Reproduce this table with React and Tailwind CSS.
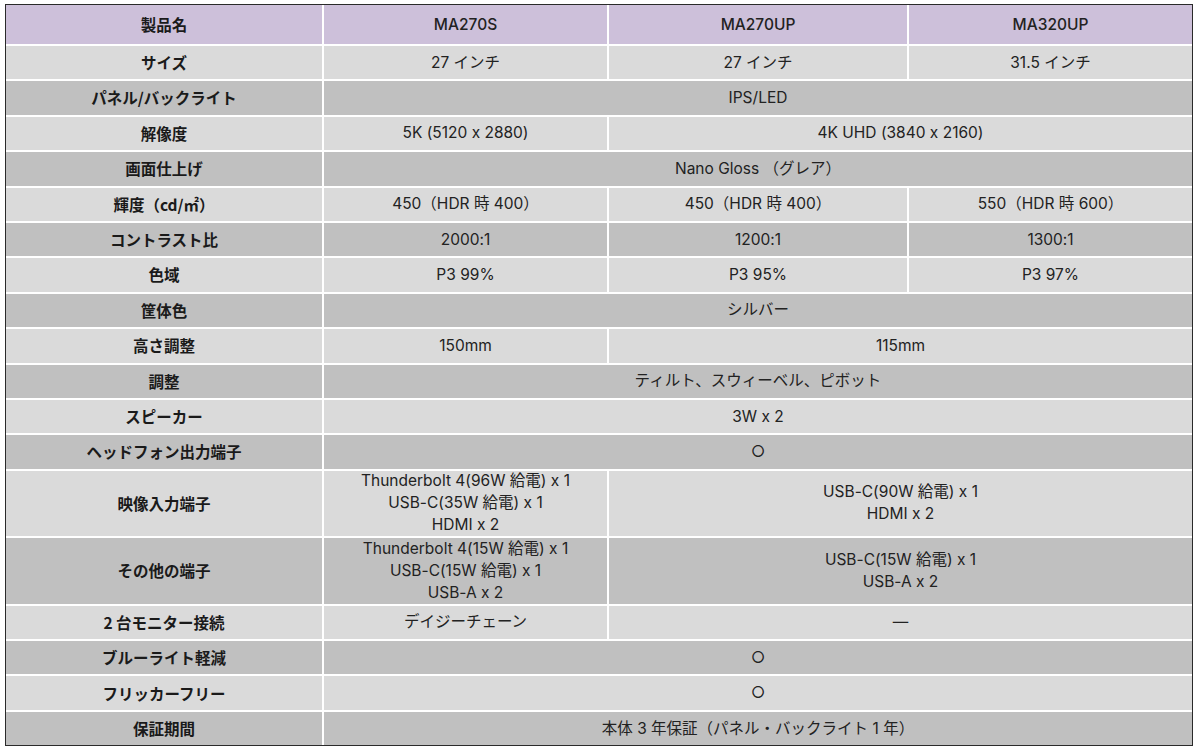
import React from "react";

const L = "bg-[#dadada]";
const D = "bg-[#c0c0c0]";

function Label({ bg, children }) {
  return (
    <div
      className={`${bg} flex items-center justify-center text-[15.5px] font-bold text-[#1a1a1a]`}
      style={{ fontFamily: '"Noto Sans CJK JP", sans-serif' }}
    >
      {children}
    </div>
  );
}

function Cell({ bg, span = "", children }) {
  return (
    <div
      className={`${bg} ${span} flex flex-col items-center justify-center text-center text-[15.5px] leading-[22px] text-[#222] [font-feature-settings:'calt'_0]`}
      style={{ fontFamily: 'Inter, "Noto Sans CJK JP", sans-serif' }}
    >
      {children}
    </div>
  );
}

export default function App() {
  const H = "bg-[#cdc0da]";
  return (
    <div className="w-[1200px] h-[752px] bg-white pl-[5px] pt-[4px]">
      <div className="w-[1188px] border border-[#2a2a2a] bg-white">
        <div className="grid grid-cols-[316px_283px_298px_283px] grid-rows-[39px_repeat(12,33.4px)_65.5px_65.5px_repeat(4,33.4px)] gap-[2px]">
          <Label bg={H}>製品名</Label>
          <Cell bg={H}><span className="font-medium">MA270S</span></Cell>
          <Cell bg={H}><span className="font-medium">MA270UP</span></Cell>
          <Cell bg={H}><span className="font-medium">MA320UP</span></Cell>

          <Label bg={L}>サイズ</Label>
          <Cell bg={L}>27 インチ</Cell>
          <Cell bg={L}>27 インチ</Cell>
          <Cell bg={L}>31.5 インチ</Cell>

          <Label bg={D}>パネル/バックライト</Label>
          <Cell bg={D} span="col-span-3">IPS/LED</Cell>

          <Label bg={L}>解像度</Label>
          <Cell bg={L}>5K (5120 x 2880)</Cell>
          <Cell bg={L} span="col-span-2">4K UHD (3840 x 2160)</Cell>

          <Label bg={D}>画面仕上げ</Label>
          <Cell bg={D} span="col-span-3">Nano Gloss （グレア）</Cell>

          <Label bg={L}>輝度（cd/㎡）</Label>
          <Cell bg={L}>450（HDR 時 400）</Cell>
          <Cell bg={L}>450（HDR 時 400）</Cell>
          <Cell bg={L}>550（HDR 時 600）</Cell>

          <Label bg={D}>コントラスト比</Label>
          <Cell bg={D}>2000:1</Cell>
          <Cell bg={D}>1200:1</Cell>
          <Cell bg={D}>1300:1</Cell>

          <Label bg={L}>色域</Label>
          <Cell bg={L}>P3 99%</Cell>
          <Cell bg={L}>P3 95%</Cell>
          <Cell bg={L}>P3 97%</Cell>

          <Label bg={D}>筐体色</Label>
          <Cell bg={D} span="col-span-3">シルバー</Cell>

          <Label bg={L}>高さ調整</Label>
          <Cell bg={L}>150mm</Cell>
          <Cell bg={L} span="col-span-2">115mm</Cell>

          <Label bg={D}>調整</Label>
          <Cell bg={D} span="col-span-3">ティルト、スウィーベル、ピボット</Cell>

          <Label bg={L}>スピーカー</Label>
          <Cell bg={L} span="col-span-3">3W x 2</Cell>

          <Label bg={D}>ヘッドフォン出力端子</Label>
          <Cell bg={D} span="col-span-3">○</Cell>

          <Label bg={L}>映像入力端子</Label>
          <Cell bg={L}>
            <span>Thunderbolt 4(96W 給電) x 1</span>
            <span>USB-C(35W 給電) x 1</span>
            <span>HDMI x 2</span>
          </Cell>
          <Cell bg={L} span="col-span-2">
            <span>USB-C(90W 給電) x 1</span>
            <span>HDMI x 2</span>
          </Cell>

          <Label bg={D}>その他の端子</Label>
          <Cell bg={D}>
            <span>Thunderbolt 4(15W 給電) x 1</span>
            <span>USB-C(15W 給電) x 1</span>
            <span>USB-A x 2</span>
          </Cell>
          <Cell bg={D} span="col-span-2">
            <span>USB-C(15W 給電) x 1</span>
            <span>USB-A x 2</span>
          </Cell>

          <Label bg={L}>2 台モニター接続</Label>
          <Cell bg={L}>デイジーチェーン</Cell>
          <Cell bg={L} span="col-span-2">—</Cell>

          <Label bg={D}>ブルーライト軽減</Label>
          <Cell bg={D} span="col-span-3">○</Cell>

          <Label bg={L}>フリッカーフリー</Label>
          <Cell bg={L} span="col-span-3">○</Cell>

          <Label bg={D}>保証期間</Label>
          <Cell bg={D} span="col-span-3">本体 3 年保証（パネル・バックライト 1 年）</Cell>
        </div>
      </div>
    </div>
  );
}
